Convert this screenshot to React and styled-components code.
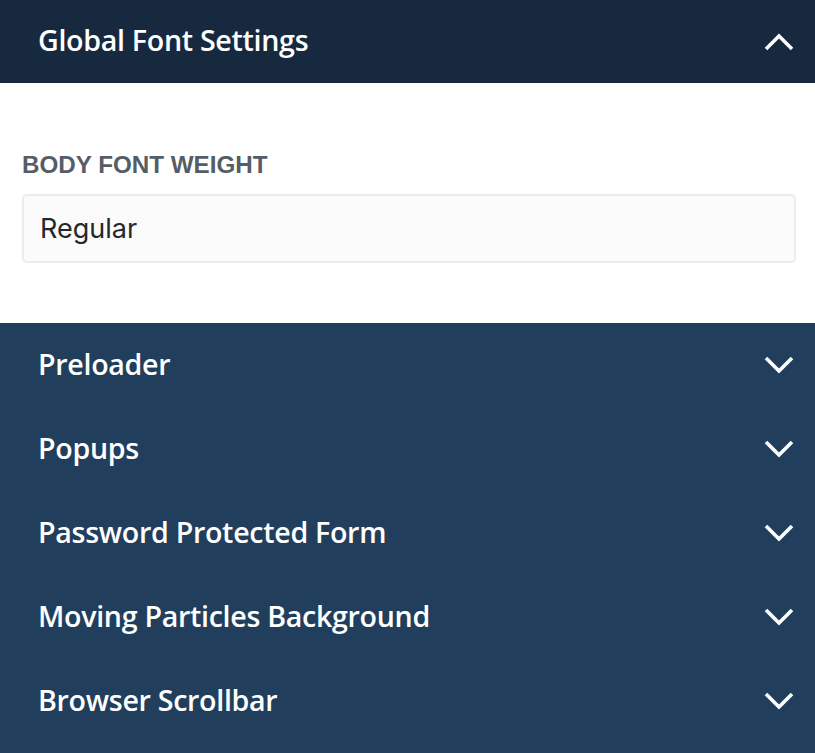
import React from 'react';
import styled, { createGlobalStyle } from 'styled-components';

const GlobalStyle = createGlobalStyle`
    html, body {
        margin: 0;
        padding: 0;
        background: #213f5c;
    }
    * {
        box-sizing: border-box;
    }
`;

const Panel = styled.div`
    width: 815px;
    min-height: 753px;
    display: flex;
    flex-direction: column;
    background: #213f5c;
    font-family: "Open Sans", "Liberation Sans", sans-serif;
`;

const SectionHeader = styled.div`
    height: ${props => props.open ? '83px' : '84px'};
    display: flex;
    align-items: center;
    justify-content: space-between;
    padding: 0 21px 0 38px;
    background: ${props => props.open ? '#16293f' : '#213f5c'};
    color: #ffffff;
    cursor: pointer;
`;

const SectionTitle = styled.span`
    font-size: 28.6px;
    font-weight: 600;
    letter-spacing: -0.3px;
    line-height: 1;
    padding-bottom: 2px;
`;

const SectionBody = styled.div`
    background: #ffffff;
    height: 240px;
    padding: 66px 19px 0 22px;
    display: flex;
    flex-direction: column;
    font-family: Inter, "Liberation Sans", sans-serif;
`;

const FieldLabel = styled.label`
    font-family: "Liberation Sans", Arial, sans-serif;
    font-size: 24.2px;
    font-weight: 700;
    color: #555d66;
    text-transform: uppercase;
    line-height: 32px;
`;

const SelectBox = styled.div`
    margin-top: 13px;
    height: 69px;
    border: 2px solid #ececec;
    border-radius: 5px;
    background: #fbfbfb;
    display: flex;
    align-items: center;
    padding-left: 16px;
    font-size: 27px;
    color: #23282d;
`;

const Chevron = ({ up }) => (
    <svg width="30" height="18" viewBox="0 0 30 18" fill="none">
        <path
            d={up ? 'M2 16 L15 3 L28 16' : 'M2 2 L15 15 L28 2'}
            stroke="#ffffff"
            strokeWidth="3.6"
        />
    </svg>
);

const sections = [
    'Preloader',
    'Popups',
    'Password Protected Form',
    'Moving Particles Background',
    'Browser Scrollbar',
];

const App = () => {
    return (
        <Panel>
            <GlobalStyle />
            <SectionHeader open>
                <SectionTitle>Global Font Settings</SectionTitle>
                <Chevron up />
            </SectionHeader>
            <SectionBody>
                <FieldLabel>Body Font Weight</FieldLabel>
                <SelectBox>Regular</SelectBox>
            </SectionBody>
            {sections.map((title, index) => (
                <SectionHeader key={index}>
                    <SectionTitle>{title}</SectionTitle>
                    <Chevron />
                </SectionHeader>
            ))}
        </Panel>
    );
};

export default App;
